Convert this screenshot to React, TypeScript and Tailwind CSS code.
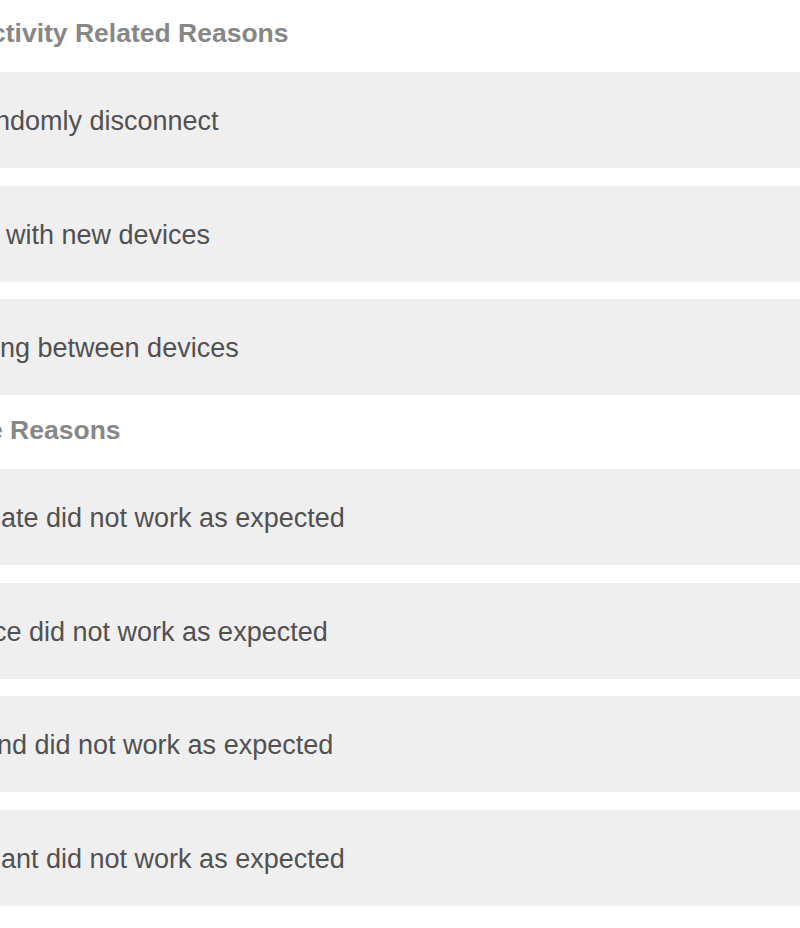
import React from "react";

interface Reason {
  label: string;
  // left offset of the visible text, the page is cut off on the left
  offset: string;
}

interface Section {
  title: string;
  titleOffset: string;
  top: string;
  reasons: Reason[];
}

const sections: Section[] = [
  {
    title: "ctivity Related Reasons",
    titleOffset: "ml-[-9px]",
    top: "pt-[20px]",
    reasons: [
      { label: "ndomly disconnect", offset: "ml-[-5px]" },
      { label: "with new devices", offset: "ml-[6px]" },
      { label: "ng between devices", offset: "ml-0" },
    ],
  },
  {
    title: "e Reasons",
    titleOffset: "ml-[-12px]",
    top: "pt-[22px]",
    reasons: [
      { label: "ate did not work as expected", offset: "ml-[1px]" },
      { label: "ce did not work as expected", offset: "ml-[-7px]" },
      { label: "nd did not work as expected", offset: "ml-[-3px]" },
      { label: "ant did not work as expected", offset: "ml-[1px]" },
    ],
  },
];

function ReasonRow({ reason }: { reason: Reason }) {
  return (
    <button
      type="button"
      className="flex h-[96px] w-full items-center bg-[#efefef] pt-[3px] text-left"
    >
      <span
        className={`${reason.offset} whitespace-nowrap text-[27px] text-[#515151]`}
      >
        {reason.label}
      </span>
    </button>
  );
}

export default function App() {
  return (
    <div className="h-[928px] w-[800px] overflow-hidden bg-white font-['Liberation_Sans',Arial,sans-serif]">
      {sections.map((section) => (
        <section key={section.title} className={section.top}>
          <h2
            className={`${section.titleOffset} mb-[26px] whitespace-nowrap text-[26.5px] leading-[26px] font-bold text-[#878787]`}
          >
            {section.title}
          </h2>
          <div className="flex flex-col gap-[17.5px]">
            {section.reasons.map((reason) => (
              <ReasonRow key={reason.label} reason={reason} />
            ))}
          </div>
        </section>
      ))}
    </div>
  );
}
